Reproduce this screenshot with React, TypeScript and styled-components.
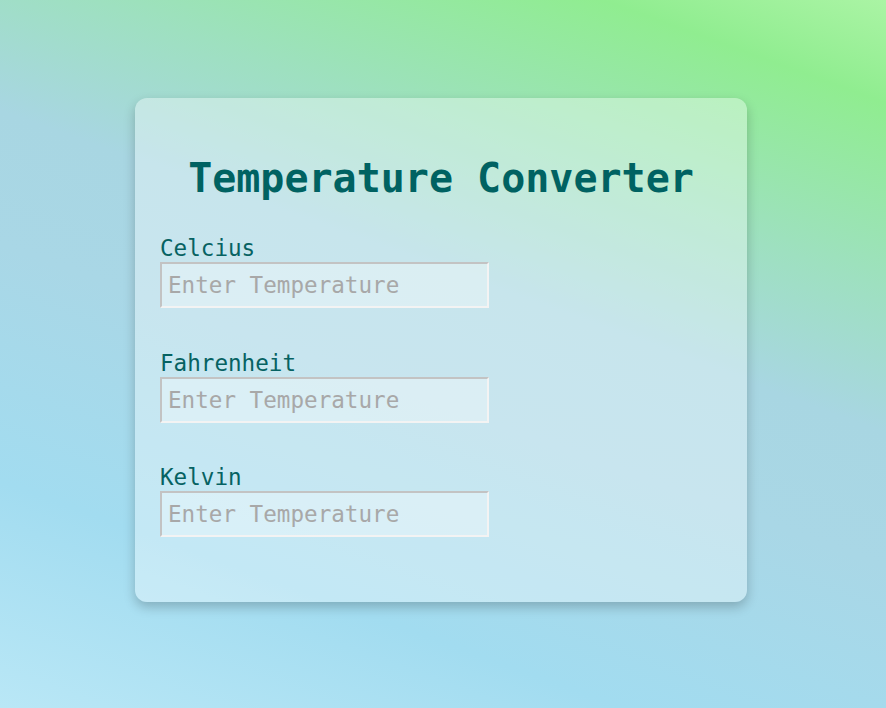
import React from "react";
import styled, { createGlobalStyle } from "styled-components";

const GlobalStyle = createGlobalStyle`
  html, body {
    margin: 0;
    padding: 0;
    height: 100%;
  }
  body {
    font-family: "DejaVu Sans Mono", "Liberation Mono", monospace;
    background: linear-gradient(20deg, #b9e7f6 0%, #a2dcf0 22%, #a9d7e6 45%, #a8d6e2 58%, #9ee0c0 72%, #90ed90 90%, #aaf4a4 100%);
    min-height: 708px;
  }
`;

const Page = styled.main`
  display: flex;
  justify-content: center;
  align-items: flex-start;
  padding: 98px 4px 0 0;
  box-sizing: border-box;
  min-height: 708px;
`;

const Card = styled.section`
  width: 612px;
  height: 504px;
  box-sizing: border-box;
  padding: 57px 25px 0;
  border-radius: 12px;
  background: rgba(255, 255, 255, 0.36);
  box-shadow: 0 5px 12px rgba(0, 0, 0, 0.22);
  display: flex;
  flex-direction: column;
`;

const Title = styled.h1`
  margin: 0 0 33px;
  font-size: 40px;
  font-weight: bold;
  line-height: 47px;
  text-align: center;
  color: #006262;
`;

const Fields = styled.div`
  display: flex;
  flex-direction: column;
  gap: 41.5px;
`;

const Field = styled.div`
  display: flex;
  flex-direction: column;
  gap: 1px;
`;

const Label = styled.label`
  font-size: 22.6px;
  line-height: 26px;
  color: #066262;
`;

const Input = styled.input`
  width: 329px;
  height: 46px;
  box-sizing: border-box;
  padding: 0 6px;
  margin: 0;
  font-family: "DejaVu Sans Mono", "Liberation Mono", monospace;
  font-size: 22.6px;
  color: #006262;
  background: rgba(255, 255, 255, 0.35);
  border-style: solid;
  border-width: 2px;
  border-color: #c3c3c3 #f3f3f3 #f3f3f3 #c3c3c3;
  outline: none;

  &::placeholder {
    color: #a8a8a8;
  }
`;

const units = ["Celcius", "Fahrenheit", "Kelvin"];

export default function App() {
  return (
    <>
      <GlobalStyle />
      <Page>
        <Card>
          <Title>Temperature Converter</Title>
          <Fields>
            {units.map((u) => (
              <Field key={u}>
                <Label htmlFor={u}>{u}</Label>
                <Input id={u} type="text" placeholder="Enter Temperature" />
              </Field>
            ))}
          </Fields>
        </Card>
      </Page>
    </>
  );
}
